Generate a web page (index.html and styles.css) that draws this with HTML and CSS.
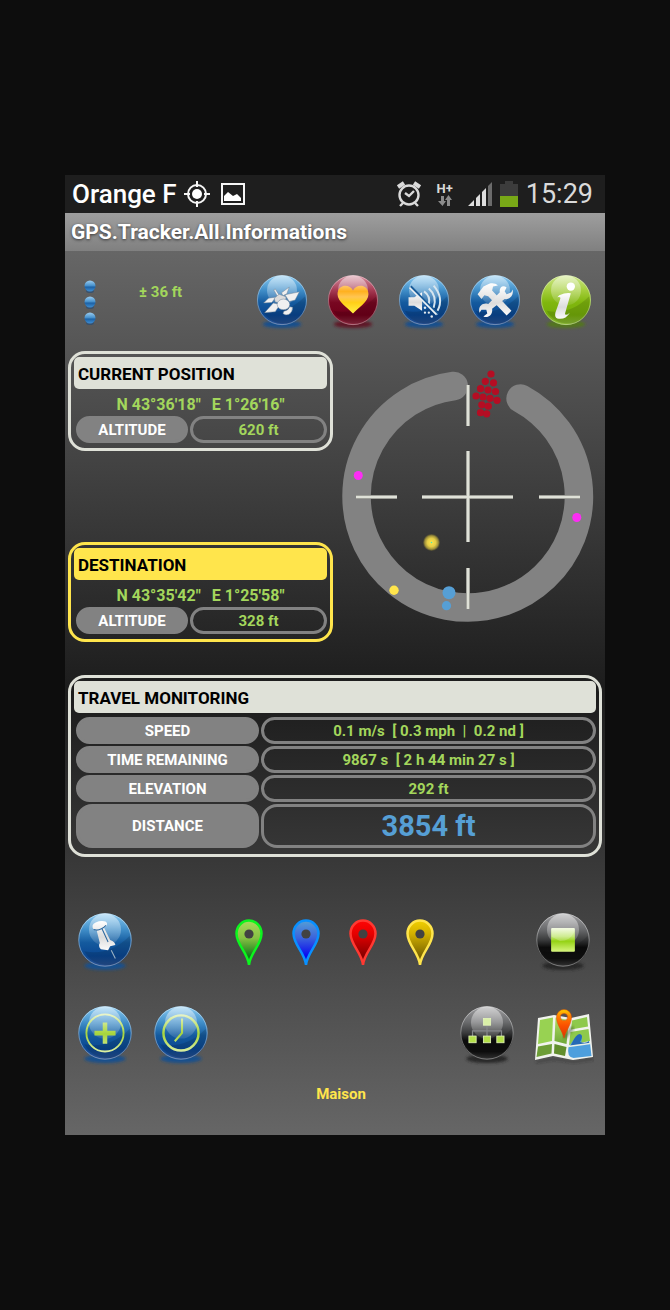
FILE: index.html
```
<!DOCTYPE html>
<html lang="en">
<head>
<meta charset="utf-8">
<meta name="viewport" content="width=device-width, initial-scale=1">
<title>GPS.Tracker.All.Informations</title>
<link rel="stylesheet" href="styles.css">
</head>
<body>
<svg class="defs" width="0" height="0" aria-hidden="true">
  <defs>
    <linearGradient id="blue" x1="0" y1="0" x2="0" y2="1"><stop offset="0" stop-color="#8ccdf4"/><stop offset=".3" stop-color="#418fc9"/><stop offset=".55" stop-color="#145a9e"/><stop offset=".8" stop-color="#0a4792"/><stop offset="1" stop-color="#29508f"/></linearGradient>
    <linearGradient id="bead" x1="0" y1="0" x2="0" y2="1"><stop offset="0" stop-color="#9ccdf0"/><stop offset=".45" stop-color="#4a94cf"/><stop offset=".6" stop-color="#1d62a6"/><stop offset="1" stop-color="#3f8fd4"/></linearGradient>
    <linearGradient id="red" x1="0" y1="0" x2="0" y2="1"><stop offset="0" stop-color="#d892a2"/><stop offset=".3" stop-color="#a63b54"/><stop offset=".55" stop-color="#780721"/><stop offset=".8" stop-color="#70001a"/><stop offset="1" stop-color="#8c2c42"/></linearGradient>
    <linearGradient id="green" x1="0" y1="0" x2="0" y2="1"><stop offset="0" stop-color="#cde889"/><stop offset=".3" stop-color="#a5ce3c"/><stop offset=".55" stop-color="#80b70d"/><stop offset=".8" stop-color="#75ad0a"/><stop offset="1" stop-color="#8cb93c"/></linearGradient>
    <linearGradient id="black" x1="0" y1="0" x2="0" y2="1"><stop offset="0" stop-color="#a0a0a2"/><stop offset=".3" stop-color="#6a6b6d"/><stop offset=".5" stop-color="#3a3b3c"/><stop offset=".64" stop-color="#0c0c0c"/><stop offset=".85" stop-color="#101010"/><stop offset="1" stop-color="#3a3a3a"/></linearGradient>
    <linearGradient id="shine" x1="0" y1="0" x2="0" y2="1"><stop offset="0" stop-color="#fff" stop-opacity=".5"/><stop offset="1" stop-color="#fff" stop-opacity=".1"/></linearGradient>
    <linearGradient id="silver" x1="0" y1="0" x2="0" y2="1"><stop offset="0" stop-color="#fff"/><stop offset=".55" stop-color="#dcdcdc"/><stop offset="1" stop-color="#fafafa"/></linearGradient>
    <linearGradient id="gold" x1="0" y1="0" x2="0" y2="1"><stop offset="0" stop-color="#ffc66b"/><stop offset=".2" stop-color="#ffb01e"/><stop offset=".4" stop-color="#ffc552"/><stop offset=".6" stop-color="#ffcf18"/><stop offset="1" stop-color="#fff044"/></linearGradient>
    <linearGradient id="lime" x1="0" y1="0" x2="0" y2="1"><stop offset="0" stop-color="#f2fae0"/><stop offset=".35" stop-color="#c4e878"/><stop offset=".55" stop-color="#94d213"/><stop offset="1" stop-color="#d8f580"/></linearGradient>
    <linearGradient id="limeline" gradientUnits="userSpaceOnUse" x1="0" y1="8" x2="0" y2="50"><stop offset="0" stop-color="#f1f8d8"/><stop offset=".5" stop-color="#a6d53b"/><stop offset="1" stop-color="#e6f4b7"/></linearGradient>
    <linearGradient id="pin-green" x1="0" y1="0" x2="0" y2="1"><stop offset="0" stop-color="#a8dc5a"/><stop offset=".4" stop-color="#86c043"/><stop offset=".8" stop-color="#117b1b"/></linearGradient>
    <linearGradient id="pin-blue" x1="0" y1="0" x2="0" y2="1"><stop offset="0" stop-color="#559fd5"/><stop offset=".4" stop-color="#3b62dc"/><stop offset=".8" stop-color="#0808f0"/></linearGradient>
    <linearGradient id="pin-red" x1="0" y1="0" x2="0" y2="1"><stop offset="0" stop-color="#ff0505"/><stop offset=".3" stop-color="#e60000"/><stop offset=".8" stop-color="#860000"/></linearGradient>
    <linearGradient id="pin-yellow" x1="0" y1="0" x2="0" y2="1"><stop offset="0" stop-color="#f1d000"/><stop offset=".3" stop-color="#d2b000"/><stop offset=".8" stop-color="#796300"/></linearGradient>
    <linearGradient id="land" x1="0" y1="0" x2="0" y2="1"><stop offset="0" stop-color="#b4df64"/><stop offset="1" stop-color="#6fa838"/></linearGradient>
    <linearGradient id="flame" x1="0" y1="0" x2="0" y2="1"><stop offset="0" stop-color="#ffd200"/><stop offset=".25" stop-color="#ff7e00"/><stop offset=".55" stop-color="#fb5200"/><stop offset="1" stop-color="#dc3300"/></linearGradient>
    <radialGradient id="glow"><stop offset="0" stop-color="#ffe54c"/><stop offset=".5" stop-color="#e3cc47"/><stop offset=".8" stop-color="#9c8e3a"/><stop offset="1" stop-color="#5b5530" stop-opacity=".5"/></radialGradient>
    <filter id="soft" x="-20%" y="-80%" width="140%" height="260%"><feGaussianBlur stdDeviation="1.6"/></filter>
    <symbol id="gloss" viewBox="0 0 60 60">
      <circle cx="30" cy="28" r="25.4" fill="none" stroke="#fff" stroke-opacity=".4" stroke-width=".9"/>
      <path d="M10 39Q34 44 54 24Q57 45 38 52Q18 54 10 39Z" fill="#000" fill-opacity=".13"/>
      <circle cx="30" cy="18" r="15.5" fill="url(#shine)"/>
    </symbol>
    <symbol id="orb-blue" viewBox="0 0 60 60"><ellipse cx="30" cy="53" rx="20" ry="4" fill="#174f8d" filter="url(#soft)"/><circle cx="30" cy="28" r="25.8" fill="url(#blue)"/><use href="#gloss"/></symbol>
    <symbol id="orb-red" viewBox="0 0 60 60"><ellipse cx="30" cy="53" rx="20" ry="4" fill="#5e1827" filter="url(#soft)"/><circle cx="30" cy="28" r="25.8" fill="url(#red)"/><use href="#gloss"/></symbol>
    <symbol id="orb-green" viewBox="0 0 60 60"><ellipse cx="30" cy="53" rx="20" ry="4" fill="#52761c" filter="url(#soft)"/><circle cx="30" cy="28" r="25.8" fill="url(#green)"/><use href="#gloss"/></symbol>
    <symbol id="orb-black" viewBox="0 0 60 60"><ellipse cx="30" cy="53" rx="20" ry="4" fill="#262626" filter="url(#soft)"/><circle cx="30" cy="28" r="25.8" fill="url(#black)"/><use href="#gloss"/></symbol>
  </defs>
</svg>

<main class="screen">
  <div class="status">
    <span class="carrier">Orange F</span>
    <svg class="status-icon" viewBox="0 0 28 28" width="28" height="28" aria-hidden="true"><g fill="none" stroke="#f5f5f5" stroke-width="2"><circle cx="14" cy="14" r="9"/><path d="M14 1v6M14 21v6M1 14h6M21 14h6"/></g><circle cx="14" cy="14" r="5" fill="#fff"/></svg>
    <svg class="status-photo" viewBox="0 0 24 22" width="24" height="22" aria-hidden="true"><rect x="1" y="1" width="22" height="20" fill="none" stroke="#f5f5f5" stroke-width="2"/><path d="M3 18v-5l4-4 5 4 4-2 4 4v3z" fill="#fff"/></svg>
    <span class="status-right">
      <svg viewBox="0 0 26 28" width="26" height="28" aria-hidden="true"><g fill="none" stroke="#dadada" stroke-width="2.4"><circle cx="13" cy="15" r="9.5"/><path d="M9 13l4 3 5-5M7 23l-3 3M19 23l3 3"/><path d="M2 7l6-4M24 7l-6-4" stroke-width="4"/></g></svg>
      <span class="network"><b>H+</b><svg viewBox="0 0 14 12" width="14" height="12" aria-hidden="true"><path d="M3 1h3v5h2l-3.500 5L0 6h3zM9 11h3V5h2l-3.500-5L7 5h2z" fill="#8b8b8b"/></svg></span>
      <svg viewBox="0 0 24 24" width="24" height="24" aria-hidden="true"><path d="M0 24l6-6v6zM8 24v-8l4-4v12zM14 24V10l4-4v18z" fill="#dedede"/><path d="M20 24V4l4-4v24z" fill="#6b6b6b"/></svg>
      <svg viewBox="0 0 18 26" width="18" height="26" aria-hidden="true"><path d="M0 3h5V0h8v3h5v12H0z" fill="#3c3c3c"/><path d="M0 15h18v11H0z" fill="#78a817"/></svg>
      <span class="clock">15:29</span>
    </span>
  </div>
  <h1 class="title">GPS.Tracker.All.Informations</h1>

  <div class="content">
    <div class="toolbar">
      <button class="menu" aria-label="Menu"><svg viewBox="0 0 14 48" width="14" height="48"><g fill="#2b4d73" opacity=".7"><ellipse cx="7" cy="12" rx="4" ry="2"/><ellipse cx="7" cy="28" rx="4" ry="2"/><ellipse cx="7" cy="44" rx="4" ry="2"/></g><circle cx="7" cy="7" r="5.500" fill="url(#bead)"/><circle cx="7" cy="23" r="5.500" fill="url(#bead)"/><circle cx="7" cy="39" r="5.500" fill="url(#bead)"/></svg></button>
      <span class="accuracy">± 36 ft</span>
      <div class="actions">
        <button class="orb" aria-label="Satellites"><svg viewBox="0 0 60 60"><use href="#orb-blue"/><g fill="#f0f0f0" stroke="#6b8196" stroke-width=".5"><path d="M12 41l9-10 7 1.500L23 40zM33 22.500l15-3-4.500 8.500-6 1.500zM29.500 20.500l8-6L35 21.500l-4 2zM11 31l5-5 7.500-1-4 5.500z"/><path d="M21.500 17.500l1.500-1 4.500 7-2 1z"/><path d="M22 26l5-4 7 2.500v3l-5 3.500-6-1z" fill="#dcdcdc"/><ellipse cx="31.500" cy="32.500" rx="6.500" ry="5.500"/><path d="M31 42l1-2.500q4 0 6-4.500l3 .5q0 5-4 7.500-4 1-6-1z"/></g></svg></button>
        <button class="orb" aria-label="Favourites"><svg viewBox="0 0 60 60"><use href="#orb-red"/><path d="M30 42C25 36 14 30 14 22c0-11 13-11 16-4 3-7 16-7 16 4 0 8-11 14-16 20z" fill="url(#gold)"/></svg></button>
        <button class="orb" aria-label="Sound off"><svg viewBox="0 0 60 60"><use href="#orb-blue"/><g fill="none" stroke="#d6e5ef"><path d="M30 19q7 5 5 13M35 16q9 8 5 20M40 13q11 13 4 26" stroke-width="2"/><path d="M16 14l28 29" stroke-width="2" stroke="#f5f5f5"/></g><path d="M14 25h6l8-5v19l-8-5h-6z" fill="url(#silver)"/><path d="M16 14l28 29" stroke="#1a5c99" stroke-width="3"/><path d="M15 15l28 28" stroke="#eef2f5" stroke-width="1.800"/><g fill="#e3eaf0"><circle cx="31" cy="36" r="1.300"/><circle cx="31" cy="41" r="1.200"/><circle cx="35" cy="41" r="1.200"/><circle cx="38" cy="45" r="1.300"/></g></svg></button>
        <button class="orb" aria-label="Settings"><svg viewBox="0 0 60 60"><use href="#orb-blue"/><path d="M12 22l6-8 6-3c4-1 7 0 9 2l-5 1-1 4 20 21-5 5-19-20-4-1-3 4z" fill="url(#silver)"/><path d="M42 15l-2 4 2 3 5-2 1-3c2 6-3 11-8 10L27 37c1 6-4 10-9 8l4-3-1-4-5 0-2 3c-2-6 3-11 9-9l12-12c-1-5 3-8 7-5z" fill="url(#silver)"/></svg></button>
        <button class="orb" aria-label="Information"><svg viewBox="0 0 60 60"><use href="#orb-green"/><circle cx="35" cy="14" r="4.300" fill="#fff"/><path d="M23 23q7-3 12-2l-6 21q0 3 5-1-5 8-13 6-3-1-2-6l5-14q1-3-3-2z" fill="url(#silver)"/></svg></button>
      </div>
    </div>

    <div class="navigation">
      <div class="places">
        <section class="panel">
          <h2 class="heading">CURRENT POSITION</h2>
          <p class="coords"><span>N 43°36'18"</span><span>E 1°26'16"</span></p>
          <dl class="readings"><dt>ALTITUDE</dt><dd>620 ft</dd></dl>
        </section>
        <section class="panel destination">
          <h2 class="heading">DESTINATION</h2>
          <p class="coords"><span>N 43°35'42"</span><span>E 1°25'58"</span></p>
          <dl class="readings"><dt>ALTITUDE</dt><dd>328 ft</dd></dl>
        </section>
      </div>
      <svg class="compass" viewBox="0 0 270 270" role="img" aria-label="Compass">
        <path d="M118.800 26A111.200 111.200 0 1 0 185.600 38.500" fill="none" stroke="#828282" stroke-width="28.500" stroke-linecap="round"/>
        <path d="M133 25v41M133 91v91M133 208v41M21 137h41M87 137h91M204 137h41" stroke="#888984" stroke-width="4" fill="none"/>
        <path d="M133 25v41M133 91v91M133 208v41M21 137h41M87 137h91M204 137h41" stroke="#dfe1d8" stroke-width="2.600" fill="none"/>
        <g fill="#b50d23"><circle cx="156" cy="14" r="3.600"/><circle cx="150.300" cy="21.300" r="3.600"/><circle cx="158.500" cy="22.800" r="3.600"/><circle cx="145.500" cy="28.700" r="3.600"/><circle cx="153" cy="30" r="3.600"/><circle cx="160.500" cy="31.500" r="3.600"/><circle cx="141" cy="36" r="3.600"/><circle cx="148" cy="37" r="3.600"/><circle cx="155" cy="38.300" r="3.600"/><circle cx="162" cy="40.300" r="3.600"/><circle cx="146.800" cy="44.800" r="3.600"/><circle cx="153.300" cy="46.200" r="3.600"/><circle cx="145.500" cy="52.700" r="3.600"/><circle cx="151.700" cy="53.800" r="3.600"/></g>
        <g fill="#fc2df4"><circle cx="23.300" cy="115.500" r="4.500"/><circle cx="241.800" cy="157.500" r="4.500"/></g>
        <circle cx="96.500" cy="182.500" r="8.500" fill="url(#glow)"/><circle cx="96.500" cy="182.500" r=".8" fill="#4be6b6"/>
        <circle cx="59" cy="230.300" r="4.700" fill="#ffe54c"/>
        <g fill="#569fd5"><circle cx="114" cy="232.700" r="6.500"/><circle cx="111.500" cy="245.700" r="4.600"/></g>
      </svg>
    </div>

    <section class="panel travel">
      <h2 class="heading">TRAVEL MONITORING</h2>
      <dl class="readings">
        <dt>SPEED</dt><dd>0.1 m/s&nbsp; [ 0.3 mph&nbsp; |&nbsp; 0.2 nd ]</dd>
        <dt>TIME REMAINING</dt><dd>9867 s&nbsp; [ 2 h 44 min 27 s ]</dd>
        <dt>ELEVATION</dt><dd>292 ft</dd>
        <dt>DISTANCE</dt><dd class="distance">3854 ft</dd>
      </dl>
    </section>

    <div class="markers">
      <button class="orb" aria-label="Pin position"><svg viewBox="0 0 60 60"><use href="#orb-blue"/><path d="M36 38l4 8" stroke="#9fb5c5" stroke-width="1"/><path d="M18 16q-1-4 6-6 7-1 8 2 0 3-3 4l6 12q5 2 5 5l-5 1-2 4-7-1q-3-3-1-6l-3-12q-3 0-4-3z" fill="url(#silver)"/><path d="M27 17l6 13M19 18q6 2 12-4" fill="none" stroke="#29679f" stroke-width="1"/></svg></button>
      <div class="pins">
        <button class="pin" aria-label="Green marker"><svg viewBox="0 0 28 48"><path d="M14 46C13 34 1.500 26 1.500 14.500a12.500 13 0 0 1 25 0C26.500 26 15 34 14 46z" fill="url(#pin-green)" stroke="#0cf51e" stroke-width="2.500"/><circle cx="14" cy="15" r="4.600" fill="#424242"/></svg></button>
        <button class="pin" aria-label="Blue marker"><svg viewBox="0 0 28 48"><path d="M14 46C13 34 1.500 26 1.500 14.500a12.500 13 0 0 1 25 0C26.500 26 15 34 14 46z" fill="url(#pin-blue)" stroke="#0990ff" stroke-width="2.500"/><circle cx="14" cy="15" r="4.600" fill="#424242"/></svg></button>
        <button class="pin" aria-label="Red marker"><svg viewBox="0 0 28 48"><path d="M14 46C13 34 1.500 26 1.500 14.500a12.500 13 0 0 1 25 0C26.500 26 15 34 14 46z" fill="url(#pin-red)" stroke="#ff3932" stroke-width="2.500"/><circle cx="14" cy="15" r="4.600" fill="#424242"/></svg></button>
        <button class="pin" aria-label="Yellow marker"><svg viewBox="0 0 28 48"><path d="M14 46C13 34 1.500 26 1.500 14.500a12.500 13 0 0 1 25 0C26.500 26 15 34 14 46z" fill="url(#pin-yellow)" stroke="#ffe54c" stroke-width="2.500"/><circle cx="14" cy="15" r="4.600" fill="#424242"/></svg></button>
      </div>
      <button class="orb" aria-label="Stop"><svg viewBox="0 0 60 60"><use href="#orb-black"/><rect x="18.500" y="16.500" width="23" height="23" rx="1" fill="url(#lime)"/><path d="M19 17h22v3q-4 9-14 9l-8-4z" fill="#fff" fill-opacity=".2"/></svg></button>
    </div>

    <div class="markers">
      <div class="pair">
        <button class="orb" aria-label="Add"><svg viewBox="0 0 60 60"><use href="#orb-blue"/><circle cx="30" cy="28" r="18" fill="none" stroke="url(#limeline)" stroke-width="1.800"/><path d="M27.800 18h4.400v8h8v4.400h-8v8h-4.400v-8h-8V26h8z" fill="url(#limeline)"/></svg></button>
        <button class="orb" aria-label="History"><svg viewBox="0 0 60 60"><use href="#orb-blue"/><circle cx="30" cy="28" r="17" fill="none" stroke="url(#limeline)" stroke-width="2.400"/><path d="M31 14v14l-7 8" fill="none" stroke="url(#limeline)" stroke-width="2"/></svg></button>
      </div>
      <div class="pair">
        <button class="orb" aria-label="Tree"><svg viewBox="0 0 60 60"><use href="#orb-black"/><path d="M30 20v14M16 32v-6h28v6" fill="none" stroke="#85878a" stroke-width="1.200"/><g fill="#b4e04a" stroke="#e3f5b8" stroke-width=".8"><rect x="26.500" y="14" width="7" height="6.500" fill="#daf0a8"/><rect x="12.500" y="31" width="7" height="6.500"/><rect x="26.500" y="31" width="7" height="6.500"/><rect x="39.500" y="31" width="7" height="6.500"/></g></svg></button>
        <button class="orb" aria-label="Map"><svg viewBox="0 0 62 62"><path d="M4 58l18-3 20 3 20-3" fill="none" stroke="#222" stroke-opacity=".5" stroke-width="2" filter="url(#soft)"/><path d="M6 14l16-3 17 3 18-4 4 43-20 3-20-4-18 4z" fill="#f1f3ee"/><path d="M8 16l13-2.500L20 37 6 40z" fill="#98d252"/><path d="M23.500 13.500L37 16l-2.500 24-12-3z" fill="url(#land)"/><path d="M40 16.500L55 13l1 9.500-17 3zM38.500 28l18-3 1.500 12-21 4z" fill="#8ec94c"/><path d="M6 42.500L20 40l-.500 9.500L4.500 53z" fill="#6d9e37"/><path d="M22.500 40l12 3-1.500 9-11-2.500z" fill="#628e2d"/><path d="M37 43q8-14 12-12 2 1 0 8h9l1.500 13-18 2q-7-1-5-11z" fill="#4e9fdd"/><path d="M40 39q4-9 8-9 4 1 0 8 6 2 9-1l.500 3-19 2z" fill="#2569b5"/><path d="M36 42.500l22-3" stroke="#eaf1e7" stroke-width="1.400"/><path d="M32 34l9-11" stroke="#34491f" stroke-opacity=".5" stroke-width="4" filter="url(#soft)"/><path fill-rule="evenodd" d="M32 34C30 26 24.500 21 24.500 13a7.500 7.500 0 0 1 15 0c0 8-5.500 13-7.500 21zM32 9.500a3.600 3.600 0 1 0 0 7.200 3.600 3.600 0 0 0 0-7.200z" fill="url(#flame)" stroke="#d94a06" stroke-width=".5"/></svg></button>
      </div>
    </div>
    <p class="place-name">Maison</p>
  </div>
</main>
</body>
</html>
```
FILE: styles.css
```
* { box-sizing: border-box; }
body {
  margin: 0;
  padding: 175px 65px;
  background: #0d0d0d;
  color: #fff;
  font-family: Roboto, "Noto Sans", sans-serif;
  font-size: 15px;
  line-height: 20px;
}
h1, h2, p, dl, dd { margin: 0; }
button { padding: 0; border: 0; background: none; color: inherit; cursor: pointer; }
svg { display: block; flex: none; }
.defs { position: absolute; }

.status {
  display: flex;
  align-items: center;
  height: 38px;
  padding: 0 12px 0 7px;
  background: #1e1e1e;
}
.carrier { font-size: 26px; font-weight: 500; line-height: 38px; }
.status-icon { margin-left: 6px; }
.status-photo { margin-left: 10px; }
.status-right { display: flex; align-items: center; gap: 8px; margin-left: auto; }
.network { display: grid; justify-items: center; width: 30px; }
.network b { font-size: 13px; line-height: 13px; color: #dadada; }
.clock { font-size: 27px; line-height: 38px; color: #dadada; }
.title {
  padding: 0 6px;
  background: linear-gradient(#9e9e9e, #808080);
  font-size: 21px;
  font-weight: 700;
  line-height: 38px;
  text-shadow: 0 1px 3px #333;
}

.content { padding-top: 22px; padding-bottom: 31px; background: linear-gradient(#666, #1c1c1c 50%, #666); }
.toolbar { display: flex; align-items: flex-start; padding: 0 10px 0 18px; }
.menu { padding-top: 6px; }
.accuracy { margin: 9px 0 0 42px; color: #a3d65c; font-weight: 700; }
.actions { display: flex; gap: 13px; margin-left: auto; }
.actions svg { width: 58px; height: 58px; }

.navigation { display: grid; grid-template-columns: 265fr 270fr; gap: 2px; margin-top: 20px; padding-left: 3px; }
.places { display: grid; align-content: space-between; }
.compass { width: 100%; margin: 9px 0 12px; }

.panel { padding: 3px 3px 5px; border: 3px solid #dfe1d8; border-radius: 17px; }
.heading {
  padding: 0 4px;
  border-radius: 5px;
  background: #dfe1d8;
  color: #000;
  font-size: 17px;
  font-weight: 700;
  line-height: 34px;
  height: 32px;
}
.destination { border-color: #ffe54c; }
.destination .heading { background: #ffe54c; }
.coords { display: flex; justify-content: center; gap: 11px; color: #a3d65c; font-size: 16px; font-weight: 700; line-height: 27px; padding-top: 2px; height: 27px; }
.readings { display: grid; grid-template-columns: 112fr 137fr; gap: 2px; padding-left: 2px; text-align: center; font-weight: 700; }
.readings dt, .readings dd { display: grid; place-items: center; min-height: 27px; border: 3px solid #828282; border-radius: 16px; }
.readings dt { background: #828282; }
.readings dd { color: #a3d65c; }
.travel { margin: 33px 3px 0; padding-bottom: 6px; }
.travel .readings { grid-template-columns: 183fr 335fr; margin-top: 4px; }
.travel .distance { min-height: 44px; color: #569fd5; font-size: 29px; line-height: 38px; }

.markers { display: flex; justify-content: space-between; align-items: center; padding: 0 11px 0 9px; }
.travel + .markers { margin: 54px 0 31px; }
.markers .orb svg { width: 62px; height: 62px; }
.pins { display: flex; gap: 29px; padding-top: 2px; }
.pin svg { width: 28px; height: 48px; }
.pair { display: flex; gap: 14px; }
.place-name { margin-top: 18px; padding-left: 12px; text-align: center; color: #ffe54c; font-weight: 700; }
```
